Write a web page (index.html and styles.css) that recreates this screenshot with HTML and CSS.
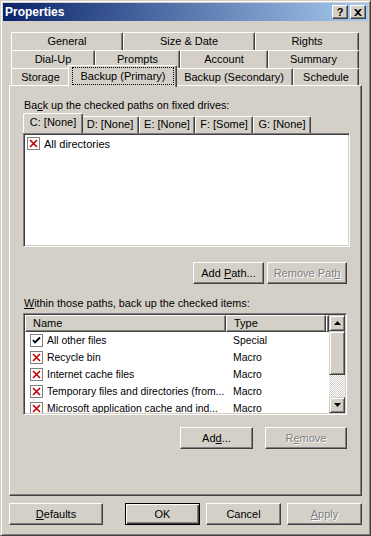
FILE: index.html
```html
<!DOCTYPE html>
<html lang="en">
<head>
    <meta charset="UTF-8">
    <meta name="viewport" content="width=device-width, initial-scale=1.0">
    <title>Properties</title>
    <link rel="stylesheet" href="styles.css">
</head>
<body>

<div class="window">
    <div class="titlebar">
        <span class="title">Properties</span>
        <div class="caption-buttons">
            <button class="caption-btn">?</button>
            <button class="caption-btn">
                <svg width="8" height="7" viewBox="0 0 8 7"><path d="M0 0h2l2 2 2-2h2L5 3.5 8 7H6L4 5 2 7H0l3-3.5z" fill="#000"/></svg>
            </button>
        </div>
    </div>

    <div class="dialog">
        <div class="tabs">
            <div class="tab-row">
                <div class="tab tab-general">General</div>
                <div class="tab tab-size">Size &amp; Date</div>
                <div class="tab tab-rights">Rights</div>
            </div>
            <div class="tab-row">
                <div class="tab tab-dialup">Dial-Up</div>
                <div class="tab tab-prompts">Prompts</div>
                <div class="tab tab-account">Account</div>
                <div class="tab tab-summary">Summary</div>
            </div>
            <div class="tab-row">
                <div class="tab tab-storage">Storage</div>
                <div class="tab tab-primary active"><span class="focus">Backup (Primary)</span></div>
                <div class="tab tab-secondary">Backup (Secondary)</div>
                <div class="tab tab-schedule">Schedule</div>
            </div>
        </div>

        <div class="panel">
            <div class="group-label">Ba<u>c</u>k up the checked paths on fixed drives:</div>

            <div class="drive-tabs">
                <div class="drive-tab drive-c active">C: [None]</div>
                <div class="drive-tab drive-d">D: [None]</div>
                <div class="drive-tab drive-e">E: [None]</div>
                <div class="drive-tab drive-f">F: [Some]</div>
                <div class="drive-tab drive-g">G: [None]</div>
            </div>

            <div class="path-list">
                <div class="path-item">
                    <svg class="check" width="13" height="13" viewBox="0 0 13 13"><rect x="0.5" y="0.5" width="12" height="12" fill="#fff" stroke="#808080"/><path d="M3 3l7 7M10 3l-7 7" stroke="#c00000" stroke-width="1.6"/></svg>
                    All directories
                </div>
            </div>

            <div class="button-row">
                <button class="btn btn-addpath">Add <u>P</u>ath...</button>
                <button class="btn btn-removepath" disabled>Remove Pat<u>h</u></button>
            </div>

            <div class="group-label"><u>W</u>ithin those paths, back up the checked items:</div>

            <div class="items-list">
                <div class="list-body">
                    <div class="list-header">
                        <div class="header-cell col-name">Name</div>
                        <div class="header-cell col-type">Type</div>
                        <div class="header-cell col-rest"></div>
                    </div>
                    <div class="list-row">
                        <div class="cell-name">
                            <svg class="check" width="13" height="13" viewBox="0 0 13 13"><rect x="0.5" y="0.5" width="12" height="12" fill="#fff" stroke="#808080"/><path d="M3 6l2 2.5L10 3.5" fill="none" stroke="#000" stroke-width="1.8"/></svg>
                            All other files
                        </div>
                        <div class="cell-type">Special</div>
                    </div>
                    <div class="list-row">
                        <div class="cell-name">
                            <svg class="check" width="13" height="13" viewBox="0 0 13 13"><rect x="0.5" y="0.5" width="12" height="12" fill="#fff" stroke="#808080"/><path d="M3 3l7 7M10 3l-7 7" stroke="#c00000" stroke-width="1.6"/></svg>
                            Recycle bin
                        </div>
                        <div class="cell-type">Macro</div>
                    </div>
                    <div class="list-row">
                        <div class="cell-name">
                            <svg class="check" width="13" height="13" viewBox="0 0 13 13"><rect x="0.5" y="0.5" width="12" height="12" fill="#fff" stroke="#808080"/><path d="M3 3l7 7M10 3l-7 7" stroke="#c00000" stroke-width="1.6"/></svg>
                            Internet cache files
                        </div>
                        <div class="cell-type">Macro</div>
                    </div>
                    <div class="list-row">
                        <div class="cell-name">
                            <svg class="check" width="13" height="13" viewBox="0 0 13 13"><rect x="0.5" y="0.5" width="12" height="12" fill="#fff" stroke="#808080"/><path d="M3 3l7 7M10 3l-7 7" stroke="#c00000" stroke-width="1.6"/></svg>
                            Temporary files and directories (from...
                        </div>
                        <div class="cell-type">Macro</div>
                    </div>
                    <div class="list-row">
                        <div class="cell-name">
                            <svg class="check" width="13" height="13" viewBox="0 0 13 13"><rect x="0.5" y="0.5" width="12" height="12" fill="#fff" stroke="#808080"/><path d="M3 3l7 7M10 3l-7 7" stroke="#c00000" stroke-width="1.6"/></svg>
                            Microsoft application cache and ind...
                        </div>
                        <div class="cell-type">Macro</div>
                    </div>
                </div>
                <div class="scrollbar">
                    <div class="scroll-btn">
                        <svg width="7" height="4" viewBox="0 0 7 4"><path d="M3.5 0L7 4H0z" fill="#000"/></svg>
                    </div>
                    <div class="scroll-thumb"></div>
                    <div class="scroll-track"></div>
                    <div class="scroll-btn">
                        <svg width="7" height="4" viewBox="0 0 7 4"><path d="M0 0h7L3.5 4z" fill="#000"/></svg>
                    </div>
                </div>
            </div>

            <div class="button-row button-row-items">
                <button class="btn btn-add">Ad<u>d</u>...</button>
                <button class="btn btn-remove" disabled>R<u>e</u>move</button>
            </div>
        </div>

        <div class="footer">
            <button class="btn btn-defaults"><u>D</u>efaults</button>
            <div class="footer-right">
                <button class="btn btn-default">OK</button>
                <button class="btn">Cancel</button>
                <button class="btn" disabled><u>A</u>pply</button>
            </div>
        </div>
    </div>
</div>

</body>
</html>
```

FILE: styles.css
```css
* {
    box-sizing: border-box;
}
body {
    margin: 0;
    font-family: "Liberation Sans", Arial, sans-serif;
    font-size: 11px;
    color: #000;
    background: #d4d0c8;
}
.window {
    width: 371px;
    height: 536px;
    background: #d4d0c8;
    border: 1px solid;
    border-color: #d4d0c8 #404040 #404040 #d4d0c8;
    box-shadow: inset 1px 1px #fff, inset -1px -1px #808080;
    padding: 2px;
}
.titlebar {
    height: 18px;
    display: flex;
    align-items: center;
    justify-content: space-between;
    padding: 0 2px 0 2px;
    background: linear-gradient(to right, #0a246a, #a6caf0);
}
.title {
    color: #fff;
    font-weight: bold;
    font-size: 12px;
}
.caption-buttons {
    display: flex;
    gap: 2px;
}
.caption-btn {
    width: 16px;
    height: 14px;
    padding: 0;
    display: flex;
    align-items: center;
    justify-content: center;
    font: bold 11px "Liberation Sans", Arial, sans-serif;
    background: #d4d0c8;
    border: 1px solid;
    border-color: #fff #404040 #404040 #fff;
    box-shadow: inset -1px -1px #808080;
}

.dialog {
    padding: 11px 6px 0 6px;
}
.tabs {
    padding-left: 2px;
    margin-bottom: -1px;
}
.tab-row {
    display: flex;
    height: 18px;
}
.tab {
    height: 18px;
    flex: none;
    text-align: center;
    line-height: 16px;
    background: #d4d0c8;
    border: 1px solid;
    border-bottom: 0;
    border-color: #fff #404040 #fff #fff;
    box-shadow: inset -1px 0 #808080;
    border-radius: 2px 2px 0 0;
    white-space: nowrap;
}
.tab.active {
    position: relative;
    z-index: 2;
    height: 22px;
    margin: -3px -2px 0;
}
.tab .focus {
    display: block;
    height: 18px;
    margin: 1px 2px 0 3px;
    border: 1px dotted #000;
    line-height: 16px;
}
.tab-general { width: 112px; }
.tab-size { width: 132px; }
.tab-rights { width: 104px; }
.tab-dialup { width: 84px; }
.tab-prompts { width: 85px; }
.tab-account { width: 88px; }
.tab-summary { width: 91px; }
.tab-storage { width: 59px; }
.tab-primary { width: 109px; }
.tab-secondary { width: 118px; }
.tab-schedule { width: 66px; }

.panel {
    position: relative;
    z-index: 1;
    height: 411px;
    background: #d4d0c8;
    border: 1px solid;
    border-color: #fff #404040 #404040 #fff;
    box-shadow: inset -1px -1px #808080;
    padding: 0 11px 0 13px;
}
.group-label {
    margin: 13px 0 0 1px;
    line-height: 13px;
    white-space: nowrap;
    font-size: 10.8px;
}

.drive-tabs {
    display: flex;
    align-items: flex-end;
    height: 20px;
    margin-top: 1px;
    padding-left: 2px;
}
.drive-tab {
    height: 17px;
    flex: none;
    text-align: center;
    line-height: 15px;
    background: #d4d0c8;
    border: 1px solid;
    border-bottom: 0;
    border-color: #fff #404040 #fff #fff;
    box-shadow: inset -1px 0 #808080;
    border-radius: 2px 2px 0 0;
    white-space: nowrap;
}
.drive-tab.active {
    position: relative;
    z-index: 2;
    height: 20px;
    line-height: 17px;
    margin: 0 -2px;
}
.drive-c { width: 60px; }
.drive-d { width: 58px; }
.drive-e { width: 56px; }
.drive-f { width: 58px; }
.drive-g { width: 58px; }

.path-list {
    height: 114px;
    background: #fff;
    border: 1px solid;
    border-color: #808080 #fff #fff #808080;
    box-shadow: inset 1px 1px #404040, inset -1px -1px #d4d0c8;
    padding: 1px 0 0 3px;
}
.path-item {
    display: flex;
    align-items: center;
    gap: 4px;
    height: 17px;
}
.check {
    flex: none;
}

.button-row {
    display: flex;
    justify-content: flex-end;
    gap: 3px;
    margin: 15px 3px 0 0;
}
.button-row-items {
    gap: 12px;
    margin-top: 12px;
}
.btn {
    height: 22px;
    padding: 0;
    font: 11px "Liberation Sans", Arial, sans-serif;
    color: #000;
    background: #d4d0c8;
    border: 1px solid;
    border-color: #fff #404040 #404040 #fff;
    box-shadow: inset -1px -1px #808080;
    white-space: nowrap;
}
.btn:disabled {
    color: #808080;
    text-shadow: 1px 1px 0 #fff;
}
.btn-default {
    border: 1px solid #000;
    box-shadow: inset 1px 1px #fff, inset -1px -1px #404040, inset -2px -2px #808080;
}
.btn-addpath { width: 71px; }
.btn-removepath { width: 80px; }
.btn-add { width: 73px; }
.btn-remove { width: 82px; }

.items-list {
    display: flex;
    height: 102px;
    margin: 3px 3px 0 0;
    background: #fff;
    border: 1px solid;
    border-color: #808080 #fff #fff #808080;
    box-shadow: inset 1px 1px #404040, inset -1px -1px #d4d0c8;
    padding: 1px;
}
.list-body {
    flex: 1;
    overflow: hidden;
}
.list-header {
    display: flex;
    height: 17px;
}
.header-cell {
    height: 17px;
    line-height: 15px;
    padding-left: 7px;
    background: #d4d0c8;
    border: 1px solid;
    border-color: #fff #404040 #404040 #fff;
    box-shadow: inset -1px -1px #808080;
}
.col-name { width: 201px; }
.col-type { width: 100px; }
.col-rest { flex: 1; padding: 0; }
.list-row {
    display: flex;
    height: 17px;
    align-items: center;
    white-space: nowrap;
    font-size: 10.4px;
}
.cell-name {
    width: 201px;
    flex: none;
    display: flex;
    align-items: center;
    gap: 4px;
    padding-left: 5px;
    overflow: hidden;
}
.cell-type {
    padding-left: 7px;
}

.scrollbar {
    width: 16px;
    display: flex;
    flex-direction: column;
}
.scroll-btn,
.scroll-thumb {
    background: #d4d0c8;
    border: 1px solid;
    border-color: #d4d0c8 #404040 #404040 #d4d0c8;
    box-shadow: inset 1px 1px #fff, inset -1px -1px #808080;
}
.scroll-btn {
    height: 16px;
    display: flex;
    align-items: center;
    justify-content: center;
}
.scroll-thumb {
    height: 44px;
}
.scroll-track {
    flex: 1;
    background: repeating-conic-gradient(#d4d0c8 0 25%, #fff 0 50%) 0 0 / 2px 2px;
}

.footer {
    display: flex;
    justify-content: space-between;
    margin-top: 7px;
}
.btn-defaults { width: 94px; }
.footer-right {
    display: flex;
    gap: 6px;
}
.footer-right .btn { width: 75px; }
```
